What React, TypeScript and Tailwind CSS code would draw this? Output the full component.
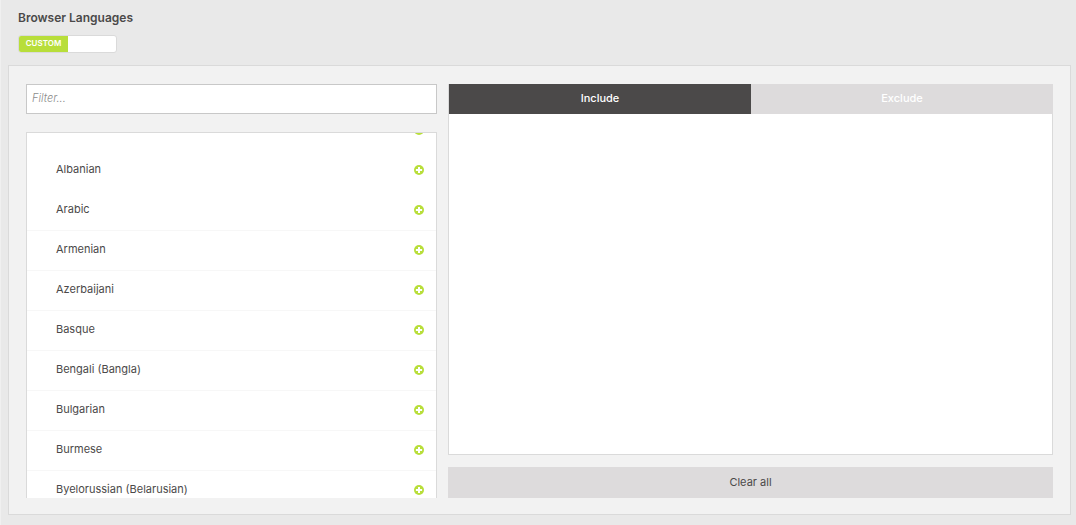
import React, { useState } from "react";

const languages = [
  { name: "Afrikaans", divider: false },
  { name: "Albanian", divider: false },
  { name: "Arabic", divider: true },
  { name: "Armenian", divider: true },
  { name: "Azerbaijani", divider: true },
  { name: "Basque", divider: true },
  { name: "Bengali (Bangla)", divider: true },
  { name: "Bulgarian", divider: true },
  { name: "Burmese", divider: true },
  { name: "Byelorussian (Belarusian)", divider: true },
];

const PlusCircle = () => (
  <svg viewBox="0 0 10 10" className="block size-[10px]" aria-hidden="true">
    <circle cx="5" cy="5" r="5" fill="#b8de3a" />
    <path d="M4 1.9h2V4h2.1v2H6v2.1H4V6H1.9V4H4z" fill="#fff" />
  </svg>
);

const App = () => {
  const [filter, setFilter] = useState("");
  const [tab, setTab] = useState("include");

  const visible = languages.filter((language) =>
    language.name.toLowerCase().includes(filter.toLowerCase())
  );

  const tabClass = (name: string) =>
    tab === name ? "bg-[#4b4949]" : "bg-[#dddbdc]";

  return (
    <main className="min-h-screen border-l border-[#f0f0f0] bg-[#e9e9e9] pt-[10px] pr-[5px] pb-[10px] pl-[7px] font-['Inter',sans-serif] text-[11px] text-[#4b4949]">
      <h2 className="pl-[10px] text-[12px] leading-4 font-semibold">
        Browser Languages
      </h2>

      <button
        type="button"
        className="mt-[9px] ml-[10px] flex h-[18px] w-[99px] overflow-hidden rounded-[3px] border border-[#dadada] bg-white text-[8px] leading-[15px] font-semibold text-white"
      >
        <span className="h-full w-[49px] bg-[#b8de3a]">CUSTOM</span>
      </button>

      <section className="mt-3 grid grid-cols-[411fr_605fr] gap-[11px] border border-[#dadada] bg-[#f2f2f2] px-[17px] pt-[18px] pb-4">
        <div className="min-w-0">
          <input
            type="text"
            aria-label="Filter languages"
            placeholder="Filter..."
            value={filter}
            onChange={(e) => setFilter(e.target.value)}
            className="block h-[30px] w-full border border-[#c8c8c8] bg-white px-[5px] pb-[2px] text-[11px] outline-none placeholder:font-light placeholder:text-[#8c8c8c] placeholder:italic"
          />

          <div className="mt-[18px] h-[366px] overflow-hidden border border-b-0 border-[#dadada] bg-white">
            <ul className="-mt-[22px]">
              {visible.map((language) => (
                <li
                  key={language.name}
                  className={`flex h-10 items-center justify-between border-b pr-3 pb-[2px] pl-[29px] ${
                    language.divider ? "border-[#f7f7f7]" : "border-transparent"
                  }`}
                >
                  <span className="pb-[2px] leading-4">{language.name}</span>
                  <button type="button" aria-label={`Add ${language.name}`}>
                    <PlusCircle />
                  </button>
                </li>
              ))}
            </ul>
          </div>
        </div>

        <div className="flex min-w-0 flex-col">
          <div className="grid grid-cols-2 border-l border-[#dadada] font-medium text-white">
            <button
              type="button"
              onClick={() => setTab("include")}
              className={`h-[30px] pb-[2px] ${tabClass("include")}`}
            >
              Include
            </button>
            <button
              type="button"
              onClick={() => setTab("exclude")}
              className={`h-[30px] pb-[2px] ${tabClass("exclude")}`}
            >
              Exclude
            </button>
          </div>
          <div className="flex-1 border border-t-0 border-[#dadada] bg-white" />
          <button type="button" className="mt-3 h-[31px] bg-[#dddbdc]">
            Clear all
          </button>
        </div>
      </section>
    </main>
  );
};

export default App;
